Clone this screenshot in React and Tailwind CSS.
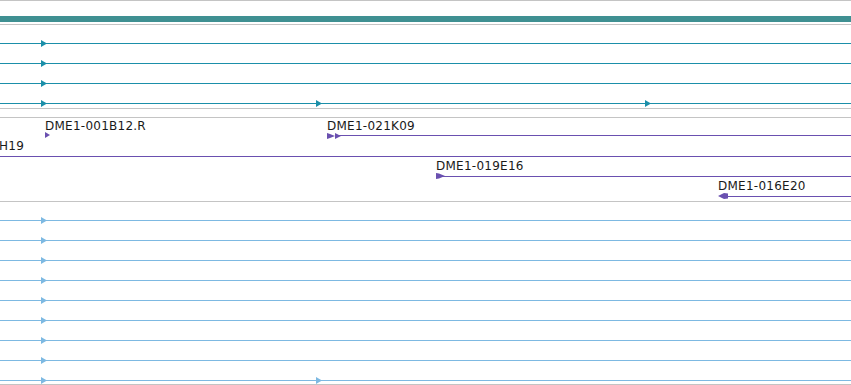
import React from "react";

const TealArrow = ({ cls }) => (
  <svg className={`absolute top-[-3px] ${cls}`} width="6" height="7" viewBox="0 0 6 7">
    <polygon points="0,0 6,3.5 0,7" fill="#1b8fa9" />
  </svg>
);

const BlueArrow = ({ cls }) => (
  <svg className={`absolute top-[-3px] ${cls}`} width="6" height="7" viewBox="0 0 6 7">
    <polygon points="0,0 6,3.5 0,7" fill="#7db9e2" />
  </svg>
);

const Gray = () => <div className="h-px bg-[#c4c4c4] shrink-0" />;

function TealRow({ extra }) {
  return (
    <div className="h-[20px] pt-[18px] shrink-0">
      <div className="relative h-px bg-[#1b8fa9]">
        <TealArrow cls="left-[41px]" />
        {extra}
      </div>
    </div>
  );
}

function BlueRow({ extra }) {
  return (
    <div className="h-[20px] pt-[18px] shrink-0">
      <div className="relative h-px bg-[#7db9e2]">
        <BlueArrow cls="left-[41px]" />
        {extra}
      </div>
    </div>
  );
}

const labelCls =
  "absolute text-[12px] leading-[14px] tracking-[0.25px] text-[#1a1a1a] whitespace-nowrap font-['DejaVu_Sans',sans-serif]";

export default function App() {
  return (
    <div className="w-[851px] h-[385px] bg-white overflow-hidden flex flex-col font-['DejaVu_Sans',sans-serif]">
      <Gray />
      <div className="h-[15px] shrink-0" />
      <div className="h-[6px] bg-[#3f9092] shrink-0" />
      <div className="h-[2px] shrink-0" />
      <Gray />
      <TealRow />
      <TealRow />
      <TealRow />
      <TealRow
        extra={
          <>
            <TealArrow cls="left-[316px]" />
            <TealArrow cls="left-[645px]" />
          </>
        }
      />
      <div className="h-[3px] shrink-0" />
      <Gray />
      <div className="h-[8px] shrink-0" />
      <Gray />

      {/* purple features */}
      <div className="relative h-[38px] shrink-0">
        <span className={`${labelCls} left-[45px] top-[1px]`}>DME1-001B12.R</span>
        <svg className="absolute left-[45px] top-[14px]" width="5" height="6" viewBox="0 0 5 6">
          <polygon points="0,0 5,3 0,6" fill="#6a50b0" />
        </svg>
        <span className={`${labelCls} left-[-1px] top-[21px]`}>H19</span>
        <span className={`${labelCls} left-[327px] top-[1px]`}>DME1-021K09</span>
        <svg className="absolute left-[327px] top-[15px]" width="14" height="6" viewBox="0 0 14 6">
          <polygon points="0,0 3,1 8,3 3,5 0,6" fill="#6a50b0" />
          <polygon points="8,0 14,3 8,6" fill="#6a50b0" />
        </svg>
        <div className="absolute left-[338px] right-0 top-[17px] h-px bg-[#6a50b0]" />
      </div>
      <div className="h-px bg-[#6a50b0] shrink-0" />
      <div className="relative h-[44px] shrink-0">
        <span className={`${labelCls} left-[436px] top-[2px]`}>DME1-019E16</span>
        <svg className="absolute left-[436px] top-[16px]" width="9" height="6" viewBox="0 0 9 6">
          <polygon points="0,0 3,0.5 9,3 3,5.5 0,6" fill="#6a50b0" />
        </svg>
        <div className="absolute left-[440px] right-0 top-[19px] h-px bg-[#6a50b0]" />
        <span className={`${labelCls} left-[718px] top-[22px]`}>DME1-016E20</span>
        <svg className="absolute left-[718px] top-[36px]" width="10" height="6" viewBox="0 0 10 6">
          <polygon points="0,3 6,0 10,0.5 10,5.5 6,6" fill="#6a50b0" />
        </svg>
        <div className="absolute left-[724px] right-0 top-[39px] h-px bg-[#6a50b0]" />
      </div>
      <Gray />

      <BlueRow />
      <BlueRow />
      <BlueRow />
      <BlueRow />
      <BlueRow />
      <BlueRow />
      <BlueRow />
      <BlueRow />
      <BlueRow extra={<BlueArrow cls="left-[316px]" />} />
      <div className="h-[2px] shrink-0" />
      <Gray />
    </div>
  );
}
